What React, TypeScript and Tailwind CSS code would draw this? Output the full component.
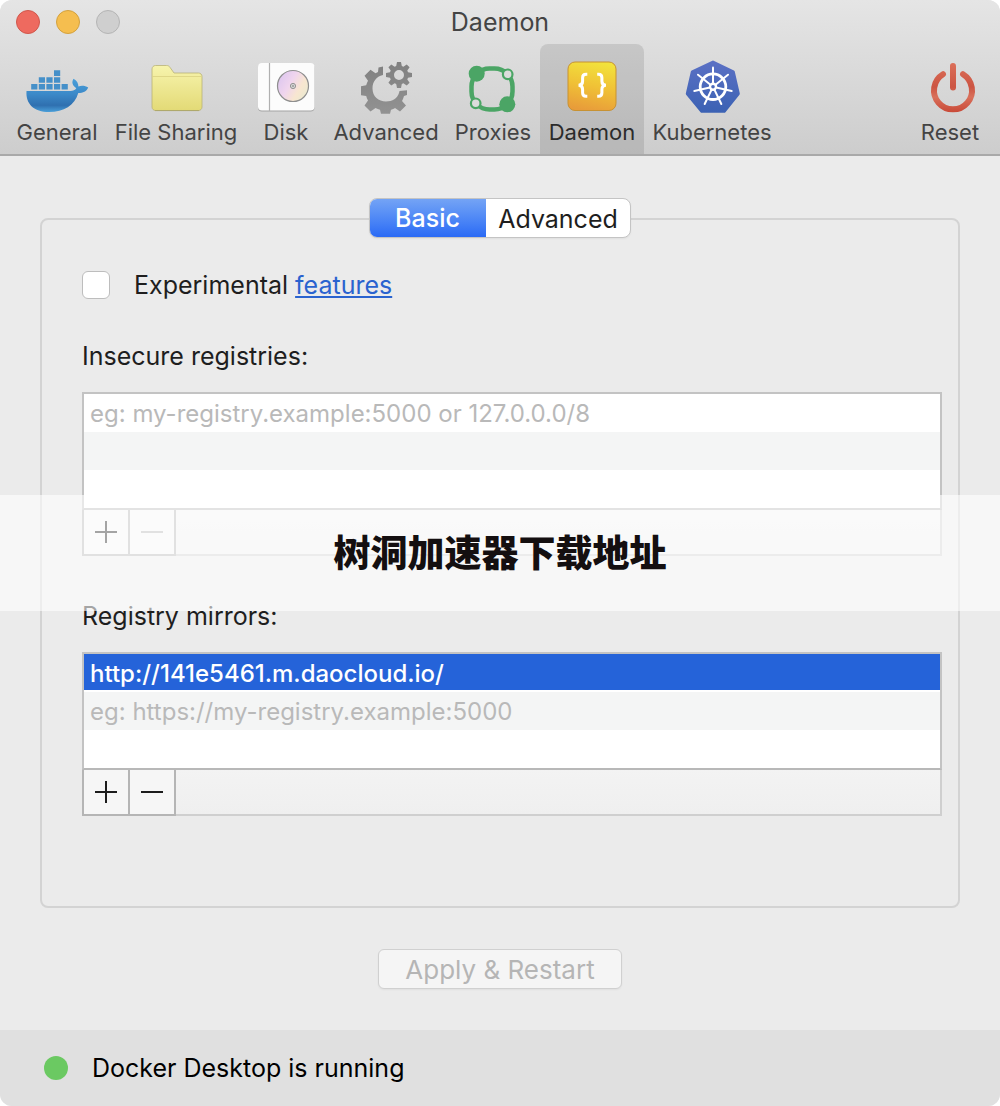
import { useState, type ReactNode } from 'react';
import { clsx } from 'clsx';

interface Tab {
  name: string;
  width: string;
  icon: ReactNode;
}

const DockerIcon = () => (
  <svg viewBox="0 0 64 56" className="h-14 w-16" aria-hidden="true">
    <defs>
      <linearGradient id="whale" x1="0" y1="0" x2="0" y2="1">
        <stop offset="0" stopColor="#4a9fd9" />
        <stop offset="0.45" stopColor="#3c8ac9" />
        <stop offset="0.8" stopColor="#2f70b0" />
        <stop offset="1" stopColor="#4a9fd9" />
      </linearGradient>
    </defs>
    <g fill="#4590c9">
      <path d="M29 10.3h6.2v5.8H29z" />
      <path d="M13.8 17.2H20v5.6h-6.2zM21.4 17.2h6.2v5.6h-6.2zM29 17.2h6.2v5.6H29z" />
      <path d="M6.2 24h6.2v5.6H6.2zM13.8 24H20v5.6h-6.2zM21.4 24h6.2v5.6h-6.2zM29 24h6.2v5.6H29zM36.6 24h6.2v5.6h-6.2z" />
    </g>
    <path
      fill="url(#whale)"
      d="M1.5 31h44c2.6 0 4.6-1 5.8-2.8-4.2-2.8-4.8-6.2-2.8-9.4 3.4 1.800 4.900 4.600 4.900 7.700 3.200-1.200 6.800-.8 9.800 1-1.400 3.800-5.200 5.500-9.900 5.500C49.500 45.500 39 52 24 52 9 52 .5 44 1.500 31z"
    />
  </svg>
);

const FolderIcon = () => (
  <svg viewBox="0 0 64 56" className="h-14 w-16" aria-hidden="true">
    <defs>
      <linearGradient id="folder" x1="0" y1="0" x2="0" y2="1">
        <stop offset="0" stopColor="#f7f4ad" />
        <stop offset="1" stopColor="#e3da76" />
      </linearGradient>
    </defs>
    <path
      fill="url(#folder)"
      stroke="#b9b377"
      strokeWidth="0.8"
      d="M8 9c0-2 1.500-3.500 3.500-3.500h11c1.600 0 2.700.6 3.600 2L30 13h24.500c2 0 3.500 1.500 3.500 3.500V47c0 2-1.500 3.500-3.500 3.500h-43C9.500 50.500 8 49 8 47z"
    />
    <path stroke="#d9d181" strokeWidth="0.8" d="M8.500 16.500h49" />
    <path stroke="#a8a164" strokeWidth="0.8" d="M11 50.600h44" />
  </svg>
);

const DiskIcon = () => (
  <svg viewBox="0 0 64 56" className="h-14 w-16" aria-hidden="true">
    <defs>
      <linearGradient id="disc" x1="0" y1="0.2" x2="1" y2="0.8">
        <stop offset="0" stopColor="#dcc6ef" />
        <stop offset="0.4" stopColor="#f0d5ee" />
        <stop offset="0.7" stopColor="#f8e6d0" />
        <stop offset="1" stopColor="#e9ead0" />
      </linearGradient>
    </defs>
    <rect x="4" y="4" width="56.500" height="47.500" rx="4" fill="#a3a3a3" />
    <rect x="4" y="3" width="56.500" height="47.500" rx="4" fill="#fcfcfc" />
    <path d="M15.500 3v48" stroke="#b0b0b0" strokeWidth="1.200" />
    <circle cx="39" cy="26" r="15.500" fill="url(#disc)" stroke="#8f8f8f" strokeWidth="1.200" />
    <circle cx="39" cy="26" r="2.600" fill="#d8d8d8" stroke="#929292" strokeWidth="1" />
    <circle cx="39" cy="26" r="1" fill="#999" />
  </svg>
);

const GearsIcon = () => (
  <svg viewBox="0 0 64 56" className="h-14 w-16" aria-hidden="true">
    <defs>
      <linearGradient id="gear" gradientUnits="userSpaceOnUse" x1="0" y1="0" x2="0" y2="54">
        <stop offset="0" stopColor="#7f7f7f" />
        <stop offset="1" stopColor="#929292" />
      </linearGradient>
    </defs>
    <g fill="url(#gear)">
      <path d="M29 6.500v8.500C22 16.500 18.500 22 18.500 28.500c0 8 6 13 13.500 13 6.500 0 11.500-3.500 13-8.500l.5-2 7.500-.8v4.800l-3 1c-.5 2-1 3.200-2 5l4 4.500-6 6-5-3.500c-1.500 1-2.500 1.400-4 1.800l-1 4h-9l-1-4c-1.500-.4-3-.9-4.500-1.800l-5 3.500-6-6 3.500-5c-1-1.500-1.400-3-1.800-4.500L7 35.300v-9l5.200-1c.4-1.500 1-3 1.800-4.500l-3.500-5 6-6 5 3.500 2.500-1.200.5-4.500z" />
      <path
        fillRule="evenodd"
        d="M43 2h4l.8 4 1.600.7 3.300-2.300 2.900 2.900-2.300 3.300.7 1.600 4 .8v4l-4 .8-.7 1.600 2.300 3.300-2.900 2.900-3.300-2.300-1.600.7-.8 4h-4l-.8-4-1.600-.7-3.300 2.300-2.900-2.900 2.300-3.300-.7-1.600-4-.8v-4l4-.8.7-1.600-2.300-3.300 2.900-2.900 3.300 2.300 1.600-.7zM45 10a5 5 0 1 0 0 10 5 5 0 0 0 0-10z"
      />
    </g>
  </svg>
);

const ProxiesIcon = () => (
  <svg viewBox="0 0 64 56" className="h-14 w-16" aria-hidden="true">
    <rect x="10.500" y="8.500" width="41" height="41" rx="18" fill="none" stroke="#4ba565" strokeWidth="4.500" />
    <circle cx="15.700" cy="13.700" r="8" fill="#4ba565" />
    <circle cx="46.300" cy="44.300" r="8" fill="#4ba565" />
    <circle cx="46.700" cy="14.300" r="4.800" fill="#dcdcdc" stroke="#4ba565" strokeWidth="2.200" />
    <circle cx="14.700" cy="43.300" r="4.800" fill="#dcdcdc" stroke="#4ba565" strokeWidth="2.200" />
  </svg>
);

const DaemonIcon = () => (
  <svg viewBox="0 0 64 56" className="h-14 w-16" aria-hidden="true">
    <defs>
      <linearGradient id="tile" x1="0.6" y1="0" x2="0.4" y2="1">
        <stop offset="0" stopColor="#f2e23c" />
        <stop offset="0.5" stopColor="#f0c136" />
        <stop offset="1" stopColor="#e89c3a" />
      </linearGradient>
    </defs>
    <rect x="8" y="2" width="48" height="48.500" rx="7" fill="url(#tile)" stroke="#c79233" />
    <g fill="none" stroke="#fff" strokeWidth="3">
      <path d="M27.300 14.300h-1.300c-2.600 0-3.400 1.200-3.400 3.500v3.400c0 2.400-.9 3.900-4 4.100 3.100.2 4 1.700 4 4.100v3.400c0 2.300.8 3.500 3.400 3.500h1.300" />
      <path d="M37.200 14.300h1.300c2.600 0 3.400 1.200 3.400 3.500v3.400c0 2.400.9 3.900 4 4.100-3.100.2-4 1.700-4 4.100v3.400c0 2.300-.8 3.500-3.400 3.500h-1.300" />
    </g>
  </svg>
);

const KubernetesIcon = () => (
  <svg viewBox="0 0 64 56" className="h-14 w-16" aria-hidden="true">
    <defs>
      <linearGradient id="helm" x1="0" y1="0" x2="0" y2="1">
        <stop offset="0" stopColor="#5a70c4" />
        <stop offset="1" stopColor="#3c62b4" />
      </linearGradient>
    </defs>
    <path
      fill="url(#helm)"
      stroke="url(#helm)"
      strokeWidth="3"
      strokeLinejoin="round"
      d="M33 2l20.300 9.800 5 21.900L44.300 51.300H21.700L7.300 33.700l5-21.900z"
    />
    <g stroke="#fff" fill="none">
      <circle cx="33" cy="26.700" r="12.800" strokeWidth="2.800" />
      {[0, 1, 2, 3, 4, 5, 6].map((spoke) => (
        <path
          key={spoke}
          d="M33 23.500V7.500"
          strokeWidth="2"
          strokeLinecap="round"
          transform={`rotate(${(spoke * 360) / 7} 33 26.700)`}
        />
      ))}
    </g>
    <circle cx="33" cy="26.700" r="4.200" fill="#fff" />
    <circle cx="33" cy="26.700" r="1.800" fill="#4a69bc" />
  </svg>
);

const PowerIcon = () => (
  <svg viewBox="0 0 64 56" className="h-14 w-16" aria-hidden="true">
    <defs>
      <linearGradient id="power" gradientUnits="userSpaceOnUse" x1="0" y1="2" x2="0" y2="52">
        <stop offset="0" stopColor="#dc705a" />
        <stop offset="0.5" stopColor="#cc5543" />
        <stop offset="0.7" stopColor="#d9705b" />
        <stop offset="1" stopColor="#c94a38" />
      </linearGradient>
    </defs>
    <g fill="none" stroke="url(#power)" strokeWidth="6" strokeLinecap="round">
      <path d="M25 14.200a19 19 0 1 0 20 0" />
      <path d="M34.990 6l.02 21.500" />
    </g>
  </svg>
);

const tabs: Tab[] = [
  { name: 'General', width: 'w-[98px]', icon: <DockerIcon /> },
  { name: 'File Sharing', width: 'w-[140px]', icon: <FolderIcon /> },
  { name: 'Disk', width: 'w-[80px]', icon: <DiskIcon /> },
  { name: 'Advanced', width: 'w-[120px]', icon: <GearsIcon /> },
  { name: 'Proxies', width: 'w-[94px]', icon: <ProxiesIcon /> },
  { name: 'Daemon', width: 'w-[104px]', icon: <DaemonIcon /> },
  { name: 'Kubernetes', width: 'w-[136px]', icon: <KubernetesIcon /> },
];

const resetTab: Tab = { name: 'Reset', width: 'w-[76px]', icon: <PowerIcon /> };

const ToolbarButton = ({ tab, active, onClick }: { tab: Tab; active?: boolean; onClick?: () => void }) => (
  <button
    type="button"
    onClick={onClick}
    className={clsx(
      'flex h-[110px] shrink-0 flex-col items-center rounded-t-lg pt-4 text-[22px] leading-8 whitespace-nowrap',
      tab.width,
      active ? 'bg-black/10 text-[#2b2b2b]' : 'text-[#444444]',
    )}
  >
    {tab.icon}
    {tab.name}
  </button>
);

interface RegistryListProps {
  id: string;
  label: string;
  placeholder: string;
  entries: string[];
}

const RegistryList = ({ id, label, placeholder, entries }: RegistryListProps) => {
  const blankRows = 2 - entries.length;

  return (
    <section>
      <label htmlFor={id} className="block leading-10">
        {label}
      </label>

      <div className="mt-4 border-2 border-[#c3c3c3] border-b-[#b8b8b8] bg-white text-2xl">
        {entries.map((entry) => (
          <input
            key={entry}
            aria-label="Registry mirror"
            defaultValue={entry}
            className="block h-[38px] w-full border-b-2 border-white bg-[#2563d9] px-1.5 pt-0.5 font-medium text-white outline-none"
          />
        ))}
        <input
          id={id}
          placeholder={placeholder}
          className={clsx(
            'block h-[38px] w-full px-1.5 outline-none placeholder:text-[#b9b9b9]',
            entries.length > 0 && 'bg-[#f4f5f5]',
          )}
        />
        {blankRows > 1 && <div className="h-[38px] bg-[#f4f5f5]" />}
        <div className="h-[38px]" />
      </div>

      {/* Add / remove */}
      <div className="flex h-[46px] border-x-2 border-b-2 border-[#cfcfcf] bg-linear-to-b from-[#f3f3f3] to-[#efefef]">
        <button
          type="button"
          aria-label="Add"
          className="-mb-0.5 -ml-0.5 flex w-12 items-center justify-center border-2 border-t-0 border-[#b5b5b5] bg-[#f6f6f6]"
        >
          <svg viewBox="0 0 22 22" className="size-[22px]" stroke="#1c1c1c" strokeWidth="2">
            <path d="M11 0v22M0 11h22" />
          </svg>
        </button>
        <button
          type="button"
          aria-label="Remove"
          disabled={entries.length === 0}
          className="-mb-0.5 flex w-[46px] items-center justify-center border-r-2 border-b-2 border-[#b5b5b5] bg-[#f6f6f6] text-[#1c1c1c] disabled:text-[#b4b4b4]"
        >
          <svg viewBox="0 0 22 22" className="size-[22px]" stroke="currentColor" strokeWidth="2">
            <path d="M0 11h22" />
          </svg>
        </button>
      </div>
    </section>
  );
};

export default function App() {
  const [tab, setTab] = useState('Daemon');

  return (
    <div className="relative overflow-hidden rounded-xl bg-[#ebebeb] font-['Inter',sans-serif] text-[25px] text-[#1e1e1e]">
      <header className="border-b-2 border-[#a9a9a9] bg-linear-to-b from-[#e5e5e5] to-[#cdcdcd]">
        <div className="grid h-11 grid-cols-3 items-center px-4">
          <div className="flex gap-4">
            <button type="button" aria-label="Close" className="size-6 rounded-full border border-[#d0574c] bg-[#ee6a5f]" />
            <button type="button" aria-label="Minimize" className="size-6 rounded-full border border-[#d3a13e] bg-[#f5be4f]" />
            <button type="button" aria-label="Zoom" disabled className="size-6 rounded-full border border-[#b4b4b4] bg-[#cfcfcf]" />
          </div>
          <h1 className="pt-0.5 text-center text-[#444444]">Daemon</h1>
        </div>

        <nav className="flex pr-3 pl-2">
          {tabs.map((item) => (
            <ToolbarButton key={item.name} tab={item} active={item.name === tab} onClick={() => setTab(item.name)} />
          ))}
          <div className="grow" />
          <ToolbarButton tab={resetTab} />
        </nav>
      </header>

      <main className="px-10 pt-[42px] pb-[41px]">
        <div className="relative mx-auto flex h-10 w-[262px] overflow-hidden rounded-lg border border-[#c4c4c4] bg-white shadow-xs">
          <button
            type="button"
            className="-my-px -ml-px w-[117px] bg-linear-to-b from-[#76a5f5] to-[#2868f5] pt-0.5 font-medium text-white"
          >
            Basic
          </button>
          <button type="button" className="grow pt-0.5">
            Advanced
          </button>
        </div>

        <div className="-mt-5 rounded-lg border-2 border-[#d3d3d3] pt-[45px] pr-4 pb-[90px] pl-10">
          <div className="flex h-10 items-center gap-6">
            <input
              id="experimental"
              type="checkbox"
              className="size-7 appearance-none rounded-md border border-[#bdbdbd] bg-white checked:bg-[#2868f5]"
            />
            <label htmlFor="experimental" className="pt-0.5">
              Experimental{' '}
              <a href="#features" className="text-[#2a63cf] underline decoration-2 underline-offset-2">
                features
              </a>
            </label>
          </div>

          <div className="mt-[31px] space-y-10">
            <RegistryList
              id="insecure"
              label="Insecure registries:"
              placeholder="eg: my-registry.example:5000 or 127.0.0.0/8"
              entries={[]}
            />
            <RegistryList
              id="mirrors"
              label="Registry mirrors:"
              placeholder="eg: https://my-registry.example:5000"
              entries={['http://141e5461.m.daocloud.io/']}
            />
          </div>
        </div>

        <button
          type="button"
          disabled
          className="mx-auto mt-[41px] block h-10 w-[244px] rounded-md border border-[#d0d0d0] bg-[#f5f5f5] pt-0.5 text-[26px] leading-9 text-[#b5b5b5] shadow-xs"
        >
          Apply &amp; Restart
        </button>
      </main>

      <footer className="flex h-[76px] items-center gap-6 bg-[#e0e0e0] px-11 text-black">
        <span className="size-6 rounded-full bg-[#6bc962]" />
        <p className="pt-0.5">Docker Desktop is running</p>
      </footer>

      {/* Banner across the window */}
      <div className="absolute inset-x-0 top-[495px] flex h-[116px] items-center justify-center bg-white/60 pb-0.5 font-['Noto_Sans_CJK_SC',sans-serif] text-[37px] font-black text-[#140f10]">
        树洞加速器下载地址
      </div>
    </div>
  );
}
